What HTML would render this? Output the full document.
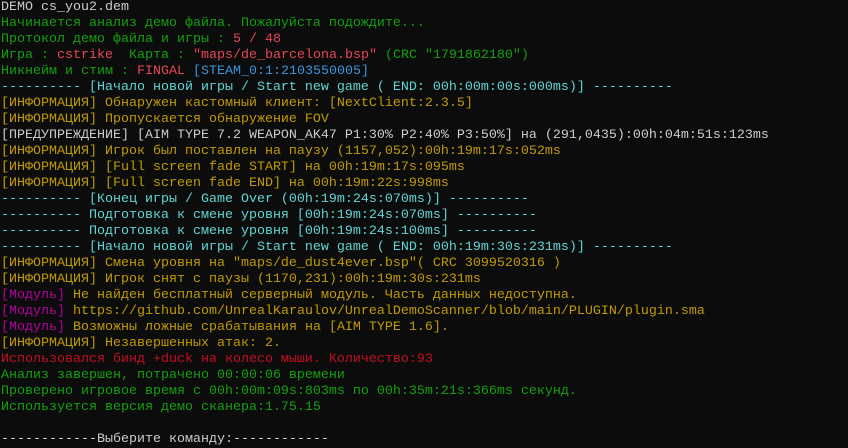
<!DOCTYPE html>
<html><head><meta charset="utf-8"><style>
html,body{margin:0;padding:0;background:#0c0c0c;width:848px;height:448px;overflow:hidden}
pre{margin:0;padding:0 0 0 1px;font-family:"Liberation Mono","DejaVu Sans Mono",monospace;font-size:13.33px;line-height:16px;color:#cccccc;white-space:pre}
.g{color:#13a10e}.r{color:#e74856}.dr{color:#c50f1f}.c{color:#3a96dd}.bc{color:#61d6d6}.y{color:#c19c00}.m{color:#b4009e}
</style></head><body><pre>DEMO cs_you2.dem
<span class="g">Начинается анализ демо файла. Пожалуйста подождите...</span>
<span class="g">Протокол демо файла и игры : </span><span class="r">5 / 48</span>
<span class="g">Игра : </span><span class="r">cstrike</span><span class="g">  Карта : </span><span class="r">"maps/de_barcelona.bsp"</span><span class="g"> (CRC "1791862180")</span>
<span class="g">Никнейм и стим : </span><span class="r">FINGAL</span> <span class="c">[STEAM_0:1:2103550005]</span>
<span class="bc">---------- [Начало новой игры / Start new game ( END: 00h:00m:00s:000ms)] ----------</span>
<span class="y">[ИНФОРМАЦИЯ] Обнаружен кастомный клиент: [NextClient:2.3.5]</span>
<span class="y">[ИНФОРМАЦИЯ] Пропускается обнаружение FOV</span>
[ПРЕДУПРЕЖДЕНИЕ] [AIM TYPE 7.2 WEAPON_AK47 P1:30% P2:40% P3:50%] на (291,0435):00h:04m:51s:123ms
<span class="y">[ИНФОРМАЦИЯ] Игрок был поставлен на паузу (1157,052):00h:19m:17s:052ms</span>
<span class="y">[ИНФОРМАЦИЯ] [Full screen fade START] на 00h:19m:17s:095ms</span>
<span class="y">[ИНФОРМАЦИЯ] [Full screen fade END] на 00h:19m:22s:998ms</span>
<span class="bc">---------- [Конец игры / Game Over (00h:19m:24s:070ms)] ----------</span>
<span class="bc">---------- Подготовка к смене уровня [00h:19m:24s:070ms] ----------</span>
<span class="bc">---------- Подготовка к смене уровня [00h:19m:24s:100ms] ----------</span>
<span class="bc">---------- [Начало новой игры / Start new game ( END: 00h:19m:30s:231ms)] ----------</span>
<span class="y">[ИНФОРМАЦИЯ] Смена уровня на "maps/de_dust4ever.bsp"( CRC 3099520316 )</span>
<span class="y">[ИНФОРМАЦИЯ] Игрок снят с паузы (1170,231):00h:19m:30s:231ms</span>
<span class="m">[Модуль]</span><span class="y"> Не найден бесплатный серверный модуль. Часть данных недоступна.</span>
<span class="m">[Модуль]</span><span class="y"> https://github.com/UnrealKaraulov/UnrealDemoScanner/blob/main/PLUGIN/plugin.sma</span>
<span class="m">[Модуль]</span><span class="y"> Возможны ложные срабатывания на [AIM TYPE 1.6].</span>
<span class="y">[ИНФОРМАЦИЯ] Незавершенных атак: 2.</span>
<span class="dr">Использовался бинд +duck на колесо мыши. Количество:93</span>
<span class="g">Анализ завершен, потрачено 00:00:06 времени</span>
<span class="g">Проверено игровое время с 00h:00m:09s:803ms по 00h:35m:21s:366ms секунд.</span>
<span class="g">Используется версия демо сканера:1.75.15</span>

------------Выберите команду:------------</pre></body></html>
